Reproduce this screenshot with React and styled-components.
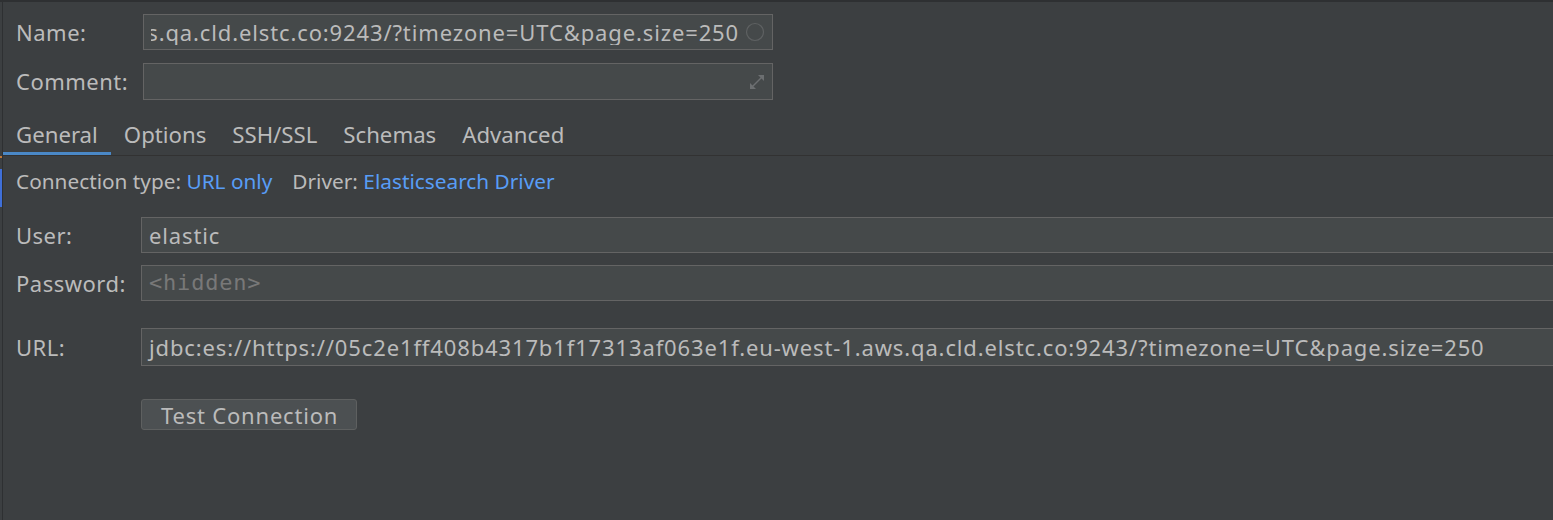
import React from 'react';
import styled, { createGlobalStyle } from 'styled-components';

const GlobalStyle = createGlobalStyle`
  body {
    margin: 0;
    background: #3c3f41;
    font-family: "Noto Sans", "Open Sans", sans-serif;
    color: #bbbbbb;
  }
`;

const URL_VALUE = 'jdbc:es://https://05c2e1ff408b4317b1f17313af063e1f.eu-west-1.aws.qa.cld.elstc.co:9243/?timezone=UTC&page.size=250';

const Frame = styled.div`
  position: relative;
  display: flex;
  height: 518px;
  border-top: 2px solid #2e3032;
  overflow: hidden;
  font-size: 22px;
  line-height: 1.2;
`;

const Gutter = styled.div`
  width: 2px;
  border-right: 1px solid #2e3032;
  flex-shrink: 0;
`;

const FocusMark = styled.div`
  position: absolute;
  left: 0;
  top: ${p => p.$top}px;
  width: 2px;
  height: ${p => p.$h}px;
  background: ${p => p.$color};
`;

const Content = styled.div`
  flex: 1;
  min-width: 0;
  padding-top: 12px;
`;

const HeaderGrid = styled.div`
  display: grid;
  grid-template-columns: 127px 630px;
  grid-auto-rows: 36px;
  row-gap: 13px;
  padding-left: 13px;
`;

const Label = styled.div`
  display: flex;
  align-items: center;
  white-space: nowrap;
  letter-spacing: 0.5px;
`;

const Field = styled.div`
  box-sizing: border-box;
  display: flex;
  align-items: center;
  gap: 6px;
  height: ${p => p.$h || 36}px;
  padding: 0 7px;
  background: #45494a;
  border: 1px solid #646464;
  overflow: hidden;
  white-space: nowrap;
  letter-spacing: 0.87px;
`;

const ScrolledValue = styled.div`
  flex: 1;
  min-width: 0;
  display: flex;
  justify-content: flex-end;
  overflow: hidden;
`;

const Spacer = styled.div`
  flex: 1;
`;

const Hidden = styled.span`
  font-family: "DejaVu Sans Mono", monospace;
  font-size: 22px;
  letter-spacing: 0.8px;
  color: #787878;
`;

const TabBar = styled.div`
  display: flex;
  margin-top: 16px;
  border-bottom: 1px solid #323232;
`;

const Tab = styled.div`
  box-sizing: border-box;
  height: 40px;
  padding: 4px 13px 0;
  display: flex;
  align-items: center;
  font-size: 22.2px;
  border-bottom: 3px solid ${p => (p.$active ? '#4a88c7' : 'transparent')};
`;

const InfoRow = styled.div`
  display: flex;
  align-items: center;
  height: 24px;
  margin-top: 13px;
  padding-left: 13px;
  white-space: nowrap;
  font-size: 20.8px;
`;

const InfoGroup = styled.span`
  margin-left: ${p => p.$offset || 0}px;
`;

const Link = styled.span`
  color: #589df6;
`;

const FormRow = styled.div`
  display: grid;
  grid-template-columns: 125px 1fr;
  margin-top: ${p => p.$top}px;
  margin-right: -40px;
  padding-left: 13px;
`;

const ButtonRow = styled.div`
  margin-top: 33px;
  padding-left: 138px;
`;

const Button = styled.button`
  box-sizing: border-box;
  height: 31px;
  padding: 0 18px 0 19px;
  background: #4c5052;
  border: 1px solid #5e6060;
  border-radius: 3px;
  color: #bbbbbb;
  font-family: inherit;
  font-size: 22px;
  letter-spacing: 0.8px;
  line-height: 1;
`;

const CircleIcon = () => (
  <svg width="20" height="20" viewBox="0 0 20 20" style={{ flexShrink: 0 }}>
    <circle cx="10" cy="10" r="8.5" fill="none" stroke="#5e6162" strokeWidth="1.2" />
  </svg>
);

const ExpandIcon = () => (
  <svg width="16" height="16" viewBox="0 0 16 16" style={{ flexShrink: 0 }}>
    <line x1="3" y1="13" x2="13" y2="3" stroke="#6c6f71" strokeWidth="1.4" />
    <polygon points="15,1 9,1 15,7" fill="#6c6f71" />
    <polygon points="1,15 1,9 7,15" fill="#6c6f71" />
  </svg>
);

const tabs = ['General', 'Options', 'SSH/SSL', 'Schemas', 'Advanced'];

export default function App() {
  return (
    <>
      <GlobalStyle />
      <Frame>
        <Gutter />
        <FocusMark $top={154} $h={2} $color="#c2793a" />
        <FocusMark $top={167} $h={38} $color="#3f6fd8" />
        <Content>
          <HeaderGrid>
            <Label>Name:</Label>
            <Field>
              <ScrolledValue>
                <span>{URL_VALUE}</span>
              </ScrolledValue>
              <CircleIcon />
            </Field>
            <Label>Comment:</Label>
            <Field $h={37}>
              <Spacer />
              <ExpandIcon />
            </Field>
          </HeaderGrid>

          <TabBar>
            {tabs.map(t => (
              <Tab key={t} $active={t === 'General'}>{t}</Tab>
            ))}
          </TabBar>

          <InfoRow>
            <InfoGroup>
              Connection type: <Link>URL only</Link>
            </InfoGroup>
            <InfoGroup $offset={20}>
              Driver: <Link>Elasticsearch Driver</Link>
            </InfoGroup>
          </InfoRow>

          <FormRow $top={24}>
            <Label>User:</Label>
            <Field>elastic</Field>
          </FormRow>
          <FormRow $top={12}>
            <Label>Password:</Label>
            <Field><Hidden>&lt;hidden&gt;</Hidden></Field>
          </FormRow>
          <FormRow $top={27}>
            <Label>URL:</Label>
            <Field $h={38}>{URL_VALUE}</Field>
          </FormRow>

          <ButtonRow>
            <Button>Test Connection</Button>
          </ButtonRow>
        </Content>
      </Frame>
    </>
  );
}
